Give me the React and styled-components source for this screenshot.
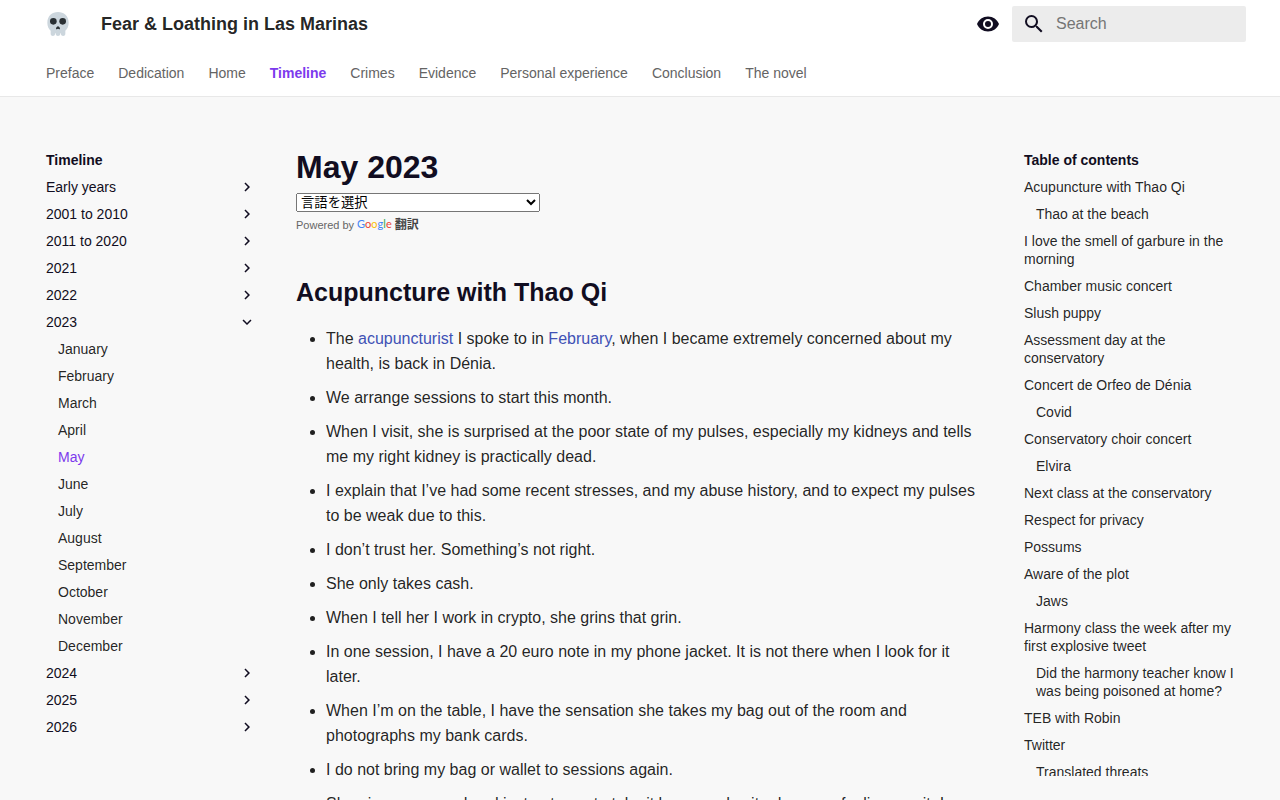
import React from 'react';
import styled, { createGlobalStyle } from 'styled-components';

const GlobalStyle = createGlobalStyle`
  * {
    box-sizing: border-box;
  }

  body {
    margin: 0;
    background: #f8f8f8;
    color: rgba(0, 0, 0, 0.87);
    font-family: "Liberation Sans", "Noto Sans CJK JP", sans-serif;
  }

  a {
    text-decoration: none;
  }
`;

const Page = styled.div`
  display: flex;
  flex-direction: column;
  height: 100vh;
  overflow: hidden;
`;

const Header = styled.header`
  background: #ffffff;
  border-bottom: 1px solid #e8e8e8;
`;

const Grid = styled.div`
  max-width: 1220px;
  margin: 0 auto;
`;

const TopBar = styled(Grid)`
  display: flex;
  align-items: center;
  height: 48px;
  padding: 0 4px 0 16px;
`;

const Logo = styled.a`
  display: flex;

  svg {
    width: 24px;
    height: 24px;
  }
`;

const SiteTitle = styled.span`
  flex: 1;
  margin-left: 31px;
  font-size: 18px;
  font-weight: 700;
`;

const IconButton = styled.button`
  display: flex;
  padding: 0;
  border: 0;
  background: none;
  color: #110d21;
  cursor: pointer;

  svg {
    width: 24px;
    height: 24px;
    fill: currentColor;
  }
`;

const SearchForm = styled.form`
  display: flex;
  align-items: center;
  width: 234px;
  height: 36px;
  margin-left: 12px;
  padding-left: 10px;
  border-radius: 2px;
  background: #ececec;
`;

const SearchInput = styled.input`
  flex: 1;
  min-width: 0;
  padding: 0 10px;
  border: 0;
  outline: 0;
  background: transparent;
  font: 16px "Liberation Sans", sans-serif;

  &::placeholder {
    color: #757575;
  }
`;

const Tabs = styled(Grid).attrs({ as: 'nav' })`
  display: flex;
  align-items: center;
  gap: 24px;
  height: 48px;
  padding: 2px 16px 0;
`;

const Tab = styled.a`
  font-size: 14px;
  line-height: 18px;
  color: ${({ $active }) => ($active ? '#7c3aed' : '#646464')};
  font-weight: ${({ $active }) => ($active ? 700 : 400)};
`;

const Main = styled(Grid)`
  display: flex;
  flex: 1;
  width: 100%;
  min-height: 0;
`;

const Sidebar = styled.nav`
  flex: 0 0 242px;
  margin: 54px 0 24px;
  padding: 0 16px;
  overflow: hidden;
  font-size: 14px;
  line-height: 18px;
`;

const SidebarTitle = styled.div`
  color: #110d21;
  font-weight: 700;
`;

const NavList = styled.ul`
  margin: 0;
  padding: 0;
  list-style: none;

  & & {
    padding-left: 12px;
  }
`;

const NavLink = styled.a`
  display: flex;
  justify-content: space-between;
  align-items: center;
  margin-top: 9px;
  color: ${({ $active, $section }) => ($active ? '#7c3aed' : $section ? '#110d21' : 'rgba(0, 0, 0, 0.87)')};
`;

const Arrow = styled.svg`
  width: 18px;
  height: 18px;
  fill: currentColor;
  transform: ${({ $open }) => ($open ? 'rotate(90deg)' : 'none')};
`;

const Content = styled.article`
  flex: 1;
  min-width: 0;
  padding: 50px 24px 24px;
  overflow-y: auto;
  scrollbar-width: none;
  font-size: 16px;
  line-height: 25px;
`;

const PageTitle = styled.h1`
  margin: 0 0 6px;
  color: #110d21;
  font-size: 32px;
  line-height: 40px;
`;

const SectionTitle = styled.h2`
  margin: 40px 0 16px;
  color: #110d21;
  font-size: 25px;
  line-height: 36px;
`;

const LanguageSelect = styled.select`
  display: block;
  width: 244px;
  height: 19px;
  font-family: "Liberation Sans", "Noto Sans CJK JP", sans-serif;
`;

const PoweredBy = styled.div`
  display: flex;
  align-items: center;
  gap: 3px;
  margin-top: 4px;
  color: #666666;
  font-size: 11px;
  line-height: 18px;
`;

const TranslateLink = styled.a`
  display: flex;
  align-items: center;
  gap: 3px;
  color: #444444;
  font-size: 12px;
  font-weight: 700;
`;

const GoogleWord = styled.span`
  padding-bottom: 2px;
  font-family: Lato, sans-serif;
  font-size: 11px;
  font-weight: 400;
  line-height: 16px;
`;

const Letter = styled.span`
  color: ${({ $color }) => $color};
`;

const Notes = styled.ul`
  margin: 0;
  padding-left: 30px;
`;

const Note = styled.li`
  margin-bottom: 9px;

  a {
    color: #4051b5;
  }
`;

const tabs = [
  'Preface',
  'Dedication',
  'Home',
  'Timeline',
  'Crimes',
  'Evidence',
  'Personal experience',
  'Conclusion',
  'The novel',
];

const months = [
  'January',
  'February',
  'March',
  'April',
  'May',
  'June',
  'July',
  'August',
  'September',
  'October',
  'November',
  'December',
];

const timeline = [
  { title: 'Early years' },
  { title: '2001 to 2010' },
  { title: '2011 to 2020' },
  { title: '2021' },
  { title: '2022' },
  { title: '2023', children: months },
  { title: '2024' },
  { title: '2025' },
  { title: '2026' },
];

const contents = [
  { title: 'Acupuncture with Thao Qi', children: ['Thao at the beach'] },
  { title: 'I love the smell of garbure in the morning' },
  { title: 'Chamber music concert' },
  { title: 'Slush puppy' },
  { title: 'Assessment day at the conservatory' },
  { title: 'Concert de Orfeo de Dénia', children: ['Covid'] },
  { title: 'Conservatory choir concert', children: ['Elvira'] },
  { title: 'Next class at the conservatory' },
  { title: 'Respect for privacy' },
  { title: 'Possums' },
  { title: 'Aware of the plot', children: ['Jaws'] },
  {
    title: 'Harmony class the week after my first explosive tweet',
    children: ['Did the harmony teacher know I was being poisoned at home?'],
  },
  { title: 'TEB with Robin' },
  { title: 'Twitter', children: ['Translated threats'] },
];

const notes = [
  'We arrange sessions to start this month.',
  'When I visit, she is surprised at the poor state of my pulses, especially my kidneys and tells me my right kidney is practically dead.',
  'I explain that I’ve had some recent stresses, and my abuse history, and to expect my pulses to be weak due to this.',
  'I don’t trust her. Something’s not right.',
  'She only takes cash.',
  'When I tell her I work in crypto, she grins that grin.',
  'In one session, I have a 20 euro note in my phone jacket. It is not there when I look for it later.',
  'When I’m on the table, I have the sensation she takes my bag out of the room and photographs my bank cards.',
  'I do not bring my bag or wallet to sessions again.',
  'She gives me a pad and instructs me to take it home and write down my feelings on it. I',
];

const googleLetters = [
  ['G', '#4285f4'],
  ['o', '#ea4335'],
  ['o', '#fbbc05'],
  ['g', '#4285f4'],
  ['l', '#34a853'],
  ['e', '#ea4335'],
];

const Skull = () => (
  <svg viewBox="0 0 36 36" aria-hidden="true">
    <path
      fill="#ccd6dd"
      d="M34 16C34 6 26.8 0 18 0S2 6 2 16c0 5.600 2 9.500 5 12v5c0 4 6.600 4 6.600 0v-1h1v1c0 4 6.800 4 6.800 0v-1h1v1c0 4 6.600 4 6.600 0v-5c3-2.500 5-6.400 5-12z"
    />
    <circle cx="11" cy="14" r="5" fill="#292f33" />
    <circle cx="25" cy="14" r="5" fill="#292f33" />
    <path fill="#292f33" d="M15 25c0-2 2-3.500 3-3.500s3 1.500 3 3.500c0 1-2 1-3 .3-1 .7-3 .7-3-.3z" />
  </svg>
);

const Home = () => (
  <Page>
    <GlobalStyle />
    <Header>
      <TopBar>
        <Logo href="#" aria-label="Fear & Loathing in Las Marinas">
          <Skull />
        </Logo>
        <SiteTitle>Fear &amp; Loathing in Las Marinas</SiteTitle>
        <IconButton type="button" aria-label="Change theme">
          <svg viewBox="0 0 24 24">
            <path d="M12 9a3 3 0 0 0-3 3 3 3 0 0 0 3 3 3 3 0 0 0 3-3 3 3 0 0 0-3-3m0 8a5 5 0 0 1-5-5 5 5 0 0 1 5-5 5 5 0 0 1 5 5 5 5 0 0 1-5 5m0-12.500C7 4.500 2.730 7.610 1 12c1.730 4.390 6 7.500 11 7.500s9.270-3.110 11-7.500c-1.730-4.390-6-7.500-11-7.500" />
          </svg>
        </IconButton>
        <SearchForm role="search">
          <IconButton type="submit" aria-label="Search">
            <svg viewBox="0 0 24 24">
              <path d="M9.500 3A6.500 6.500 0 0 1 16 9.500c0 1.610-.59 3.090-1.560 4.230l.27.27h.79l5 5-1.500 1.500-5-5v-.79l-.27-.27A6.520 6.520 0 0 1 9.500 16 6.500 6.500 0 0 1 3 9.500 6.500 6.500 0 0 1 9.500 3m0 2C7 5 5 7 5 9.500S7 14 9.500 14 14 12 14 9.500 12 5 9.500 5" />
            </svg>
          </IconButton>
          <SearchInput type="text" placeholder="Search" aria-label="Search" />
        </SearchForm>
      </TopBar>
      <Tabs>
        {tabs.map(tab => (
          <Tab key={tab} href="#" $active={tab === 'Timeline'}>{tab}</Tab>
        ))}
      </Tabs>
    </Header>
    <Main>
      <Sidebar aria-label="Timeline">
        <SidebarTitle>Timeline</SidebarTitle>
        <NavList>
          {timeline.map(({ title, children }) => (
            <li key={title}>
              <NavLink href="#" $section>
                {title}
                <Arrow viewBox="0 0 24 24" $open={!!children}>
                  <path d="M8.590 16.580 13.170 12 8.590 7.410 10 6l6 6-6 6z" />
                </Arrow>
              </NavLink>
              {children && (
                <NavList>
                  {children.map(month => (
                    <li key={month}>
                      <NavLink href="#" $active={month === 'May'}>{month}</NavLink>
                    </li>
                  ))}
                </NavList>
              )}
            </li>
          ))}
        </NavList>
      </Sidebar>
      <Content>
        <PageTitle>May 2023</PageTitle>
        <LanguageSelect aria-label="言語を選択">
          <option>言語を選択</option>
        </LanguageSelect>
        <PoweredBy>
          Powered by
          <TranslateLink href="#">
            <GoogleWord>
              {googleLetters.map(([letter, color], i) => (
                <Letter key={i} $color={color}>{letter}</Letter>
              ))}
            </GoogleWord>
            翻訳
          </TranslateLink>
        </PoweredBy>
        <SectionTitle>Acupuncture with Thao Qi</SectionTitle>
        <Notes>
          <Note>
            The <a href="#">acupuncturist</a> I spoke to in <a href="#">February</a>, when I became
            extremely concerned about my health, is back in Dénia.
          </Note>
          {notes.map(note => (
            <Note key={note}>{note}</Note>
          ))}
        </Notes>
      </Content>
      <Sidebar aria-label="Table of contents">
        <SidebarTitle>Table of contents</SidebarTitle>
        <NavList>
          {contents.map(({ title, children }) => (
            <li key={title}>
              <NavLink href="#">{title}</NavLink>
              {children && (
                <NavList>
                  {children.map(child => (
                    <li key={child}>
                      <NavLink href="#">{child}</NavLink>
                    </li>
                  ))}
                </NavList>
              )}
            </li>
          ))}
        </NavList>
      </Sidebar>
    </Main>
  </Page>
);

export default Home;
